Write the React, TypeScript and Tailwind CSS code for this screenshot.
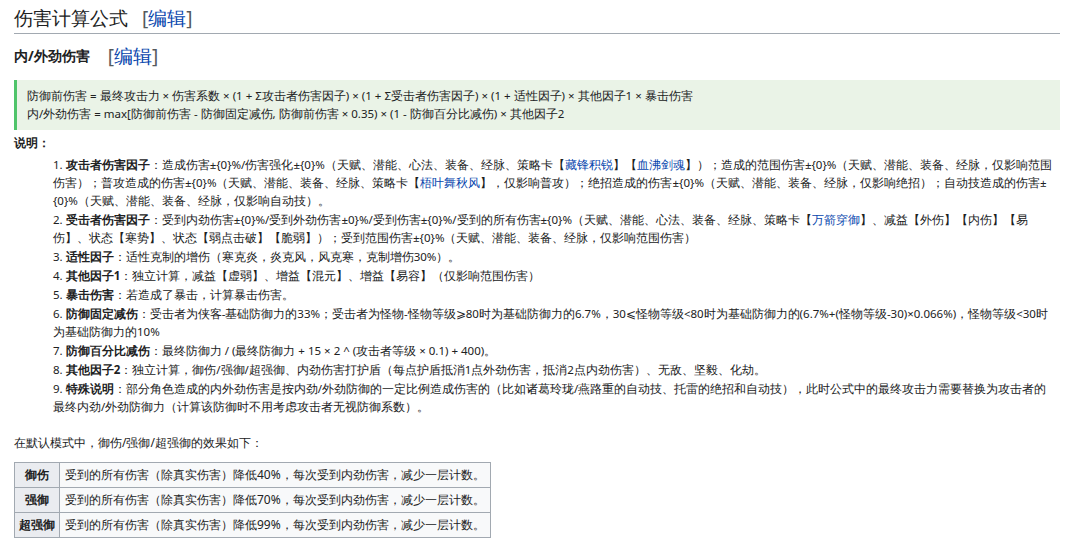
import React from 'react';

const A = ({ children }: { children: React.ReactNode }) => (
  <span className="text-[#0645ad]">{children}</span>
);

const items: { t: string; body: React.ReactNode }[] = [
  {
    t: '攻击者伤害因子',
    body: (
      <>
        造成伤害±{'{0}'}%/伤害强化±{'{0}'}%（天赋、潜能、心法、装备、经脉、策略卡【<A>藏锋积锐</A>】【<A>血沸剑魂</A>】）；造成的范围伤害±{'{0}'}%（天赋、潜能、装备、经脉，仅影响范围伤害）；普攻造成的伤害±{'{0}'}%（天赋、潜能、装备、经脉、策略卡【<A>梧叶舞秋风</A>】，仅影响普攻）；绝招造成的伤害±{'{0}'}%（天赋、潜能、装备、经脉，仅影响绝招）；自动技造成的伤害±{'{0}'}%（天赋、潜能、装备、经脉，仅影响自动技）。
      </>
    ),
  },
  {
    t: '受击者伤害因子',
    body: (
      <>
        受到内劲伤害±{'{0}'}%/受到外劲伤害±{'0}'}%/受到伤害±{'{0}'}%/受到的所有伤害±{'{0}'}%（天赋、潜能、心法、装备、经脉、策略卡【<A>万箭穿御</A>】、减益【外伤】【内伤】【易伤】、状态【寒势】、状态【弱点击破】【脆弱】）；受到范围伤害±{'{0}'}%（天赋、潜能、装备、经脉，仅影响范围伤害）
      </>
    ),
  },
  { t: '适性因子', body: '适性克制的增伤（寒克炎，炎克风，风克寒，克制增伤30%）。' },
  { t: '其他因子1', body: '独立计算，减益【虚弱】、增益【混元】、增益【易容】（仅影响范围伤害）' },
  { t: '暴击伤害', body: '若造成了暴击，计算暴击伤害。' },
  {
    t: '防御固定减伤',
    body: '受击者为侠客-基础防御力的33%；受击者为怪物-怪物等级⩾80时为基础防御力的6.7%，30⩽怪物等级<80时为基础防御力的(6.7%+(怪物等级-30)×0.066%)，怪物等级<30时为基础防御力的10%',
  },
  { t: '防御百分比减伤', body: '最终防御力 / (最终防御力 + 15 × 2 ^ (攻击者等级 × 0.1) + 400)。' },
  { t: '其他因子2', body: '独立计算，御伤/强御/超强御、内劲伤害打护盾（每点护盾抵消1点外劲伤害，抵消2点内劲伤害）、无敌、坚毅、化劫。' },
  {
    t: '特殊说明',
    body: '部分角色造成的内外劲伤害是按内劲/外劲防御的一定比例造成伤害的（比如诸葛玲珑/燕路重的自动技、托雷的绝招和自动技），此时公式中的最终攻击力需要替换为攻击者的最终内劲/外劲防御力（计算该防御时不用考虑攻击者无视防御系数）。',
  },
];

const rows = [
  ['御伤', '受到的所有伤害（除真实伤害）降低40%，每次受到内劲伤害，减少一层计数。'],
  ['强御', '受到的所有伤害（除真实伤害）降低70%，每次受到内劲伤害，减少一层计数。'],
  ['超强御', '受到的所有伤害（除真实伤害）降低99%，每次受到内劲伤害，减少一层计数。'],
];

export default function App() {
  return (
    <div className="w-[1080px] h-[545px] overflow-hidden bg-white text-[#202122] font-['Noto_Sans_CJK_SC',sans-serif] pl-[14px] pr-[20px] pt-[4px]">
      <h2 className="text-[19px] leading-[28px] border-b border-[#a2a9b1] pb-[1px] flex gap-[14px]">
        <span>伤害计算公式</span>
        <span className="text-[#54595d]">[<span className="text-[#0645ad]">编辑</span>]</span>
      </h2>
      <h3 className="mt-[10px] text-[14px] font-bold leading-[24px] flex items-center gap-[18px]">
        <span>内/外劲伤害</span>
        <span className="font-normal text-[19px] text-[#54595d]">[<span className="text-[#0645ad]">编辑</span>]</span>
      </h3>
      <div className="mt-[12px] bg-[#eaf3e7] border-l-[3px] border-[#4fc46a] px-[10px] py-[7px] text-[11.5px] leading-[18px]">
        <div>防御前伤害 = 最终攻击力 × 伤害系数 × (1 + Σ攻击者伤害因子) × (1 + Σ受击者伤害因子) × (1 + 适性因子) × 其他因子1 × 暴击伤害</div>
        <div>内/外劲伤害 = max[防御前伤害 - 防御固定减伤, 防御前伤害 × 0.35) × (1 - 防御百分比减伤) × 其他因子2</div>
      </div>
      <div className="mt-[4px] text-[12px] font-bold leading-[18px]">说明：</div>
      <ol className="pl-[39px] pr-[4px] mt-[4px] text-[11.5px] leading-[18px]">
        {items.map((it, i) => (
          <li key={i} className="mb-[1px]">
            {i + 1}. <b>{it.t}</b>：{it.body}
          </li>
        ))}
      </ol>
      <p className="mt-[18px] text-[12px] leading-[18px]">在默认模式中，御伤/强御/超强御的效果如下：</p>
      <table className="mt-[10px] border border-[#a2a9b1] bg-[#f8f9fa] text-[12px] border-collapse">
        <tbody>
          {rows.map(([h, d]) => (
            <tr key={h} className="h-[25px]">
              <th className="border border-[#a2a9b1] bg-[#eaecf0] px-[4px] font-bold">{h}</th>
              <td className="border border-[#a2a9b1] px-[5px]">{d}</td>
            </tr>
          ))}
        </tbody>
      </table>
    </div>
  );
}
